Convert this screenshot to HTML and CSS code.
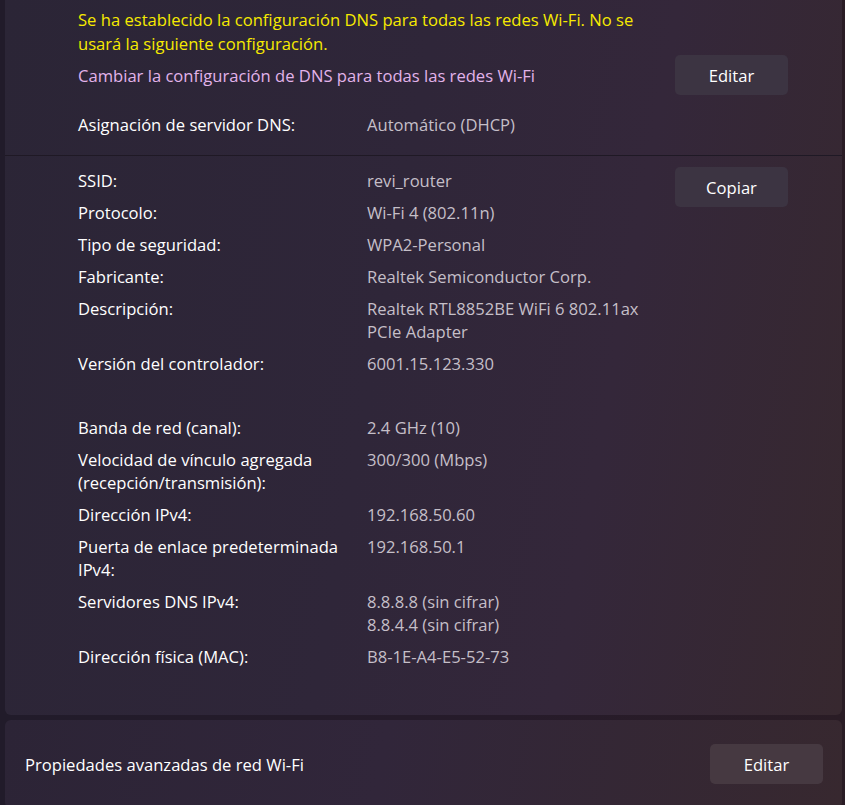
FILE: index.html
```html
<!DOCTYPE html>
<html lang="es">
<head>
<meta charset="utf-8">
<title>Propiedades de Wi-Fi</title>
<link rel="stylesheet" href="styles.css">
</head>
<body>
<div class="page">
  <section class="card card-main">
    <div class="dns-section">
      <p class="warning">Se ha establecido la configuración DNS para todas las redes Wi-Fi. No se<br>usará la siguiente configuración.</p>
      <div class="link-row">
        <span class="link">Cambiar la configuración de DNS para todas las redes Wi-Fi</span>
        <button class="btn">Editar</button>
      </div>
      <div class="row dns-row">
        <span class="label">Asignación de servidor DNS:</span>
        <span class="value">Automático (DHCP)</span>
      </div>
    </div>
    <div class="props-section">
      <div class="props">
        <div class="row"><span class="label">SSID:</span><span class="value">revi_router</span></div>
        <div class="row"><span class="label">Protocolo:</span><span class="value">Wi-Fi 4 (802.11n)</span></div>
        <div class="row"><span class="label">Tipo de seguridad:</span><span class="value">WPA2-Personal</span></div>
        <div class="row"><span class="label">Fabricante:</span><span class="value">Realtek Semiconductor Corp.</span></div>
        <div class="row"><span class="label">Descripción:</span><span class="value">Realtek RTL8852BE WiFi 6 802.11ax<br>PCIe Adapter</span></div>
        <div class="row"><span class="label">Versión del controlador:</span><span class="value">6001.15.123.330</span></div>
        <div class="row spacer"></div>
        <div class="row"><span class="label">Banda de red (canal):</span><span class="value">2.4 GHz (10)</span></div>
        <div class="row"><span class="label">Velocidad de vínculo agregada<br>(recepción/transmisión):</span><span class="value">300/300 (Mbps)</span></div>
        <div class="row"><span class="label">Dirección IPv4:</span><span class="value">192.168.50.60</span></div>
        <div class="row"><span class="label">Puerta de enlace predeterminada<br>IPv4:</span><span class="value">192.168.50.1</span></div>
        <div class="row"><span class="label">Servidores DNS IPv4:</span><span class="value">8.8.8.8 (sin cifrar)<br>8.8.4.4 (sin cifrar)</span></div>
        <div class="row"><span class="label">Dirección física (MAC):</span><span class="value">B8-1E-A4-E5-52-73</span></div>
      </div>
      <button class="btn">Copiar</button>
    </div>
  </section>
  <section class="card card-adv">
    <span class="adv-label">Propiedades avanzadas de red Wi-Fi</span>
    <button class="btn">Editar</button>
  </section>
</div>
</body>
</html>
```
FILE: styles.css
```css
* { box-sizing: border-box; }
html, body { margin: 0; padding: 0; }
body {
  width: 845px;
  height: 805px;
  overflow: hidden;
  background: linear-gradient(90deg, #211b2a 0%, #261b2a 60%, #2a1c25 100%);
  font-family: "Open Sans", "Noto Sans", sans-serif;
  font-size: 16.6px;
  color: #ffffff;
}
.page {
  padding: 0 3px 0 5px;
  display: flex;
  flex-direction: column;
  gap: 5px;
}
.card {
  background: linear-gradient(100deg, #2b2536 0%, #2f2639 45%, #34273a 70%, #37282f 100%);
  border-radius: 0 0 6px 6px;
}
.card-main {
  padding: 0 54px 0 73px;
}
.dns-section {
  padding-top: 8px;
  padding-bottom: 19px;
  border-bottom: 1px solid #1f1925;
  margin: 0 -54px 0 -73px;
  padding-left: 73px;
  padding-right: 54px;
}
.warning {
  margin: 0;
  color: #f6ea00;
  line-height: 24px;
}
.link-row {
  display: flex;
  align-items: center;
  justify-content: space-between;
  margin-top: -1px;
}
.link {
  color: #e2b3ea;
}
.btn {
  width: 113px;
  height: 40px;
  border: none;
  border-radius: 5px;
  background: #3c3442;
  color: #ffffff;
  font-family: inherit;
  font-size: 16.6px;
  padding: 0;
  flex: none;
}
.row {
  display: grid;
  grid-template-columns: 289px auto;
  line-height: 23px;
}
.dns-row {
  margin-top: 18px;
}
.value {
  color: #c5bfc8;
}
.props-section {
  display: flex;
  justify-content: space-between;
  align-items: flex-start;
  padding-top: 11px;
  padding-bottom: 47px;
}
.props {
  display: flex;
  flex-direction: column;
  gap: 9px;
  padding-top: 2px;
}
.spacer { height: 23px; }
.card-adv {
  border-radius: 6px;
  display: flex;
  align-items: center;
  justify-content: space-between;
  padding: 24px 19px 24px 20px;
  background: linear-gradient(100deg, #2c2436 0%, #31263a 45%, #37282f 100%);
}
.adv-label { color: #ffffff; }
.card-adv .btn { background: #463941; }
```
